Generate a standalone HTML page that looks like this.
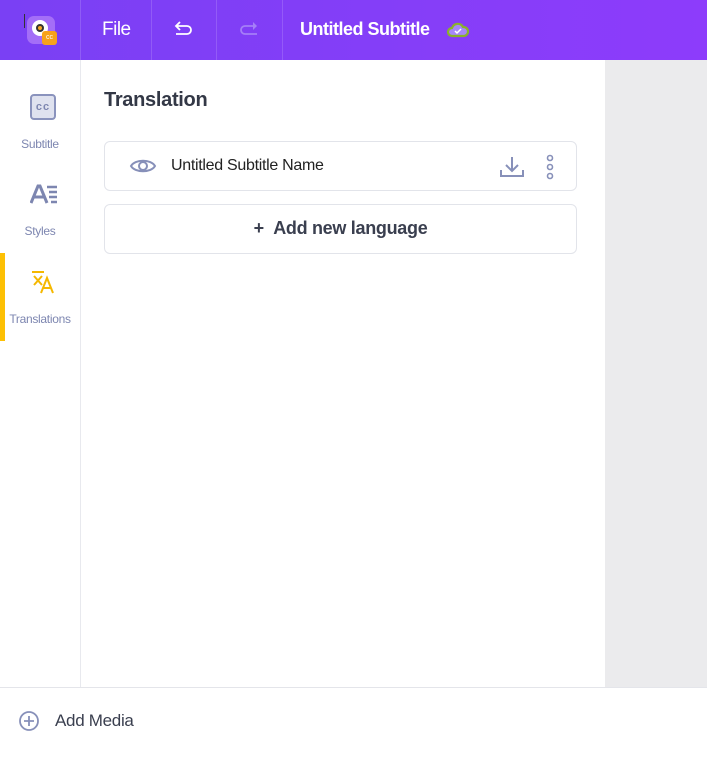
<!DOCTYPE html>
<html><head><style>
*{margin:0;padding:0;box-sizing:border-box}
body{width:707px;height:779px;overflow:hidden;font-family:"Liberation Sans",sans-serif;background:#fff;position:relative}
.hdr{position:absolute;left:0;top:0;width:707px;height:60px;background:linear-gradient(90deg,#7a40f4,#8d3cfb);color:#fff}
.sep{position:absolute;top:0;width:1px;height:60px;background:rgba(255,255,255,0.15)}
.side{position:absolute;left:0;top:60px;width:81px;height:627px;border-right:1px solid #e8e9ee;background:#fff}
.it{position:absolute;left:0;width:80px;text-align:center;font-size:12px;color:#7d86b0;letter-spacing:-0.3px}
.main{position:absolute;left:81px;top:60px;width:524px;height:627px;background:#fff}
.grey{position:absolute;left:605px;top:60px;width:102px;height:627px;background:#ebebed}
.card{position:absolute;left:104px;width:473px;height:50px;border:1px solid #e2e4ea;border-radius:6px;background:#fff}
.bot{position:absolute;left:0;top:687px;width:707px;height:92px;border-top:1px solid #e4e5ea;background:#fff}
</style></head><body>
<div class="hdr">
 <div style="position:absolute;left:27px;top:16px;width:28px;height:28px;border-radius:7px;background:#a46ef7"></div>
 <div style="position:absolute;left:32px;top:20px;width:16px;height:16px;border-radius:50%;background:#fff"></div>
 <div style="position:absolute;left:36px;top:24px;width:8px;height:8px;border-radius:50%;background:#f5a623;border:2px solid #333"></div>
 <div style="position:absolute;left:42px;top:31px;width:15px;height:14px;border-radius:3px;background:#f7a21b;font-size:7px;color:#fff;text-align:center;line-height:14px">cc</div>
 <div style="position:absolute;left:24px;top:14px;width:1px;height:14px;background:#333"></div>
 <div class="sep" style="left:80px"></div>
 <div style="position:absolute;left:102px;top:19px;font-size:19px;letter-spacing:-0.5px">File</div>
 <div class="sep" style="left:151px"></div>
 <svg style="position:absolute;left:173px;top:20px" width="22" height="18" viewBox="0 0 22 18"><path d="M4 6h10a4 4 0 0 1 0 8H3M7 2L3 6l4 4" fill="none" stroke="#fff" stroke-width="1.8"/></svg>
 <div class="sep" style="left:216px"></div>
 <svg style="position:absolute;left:238px;top:20px" width="22" height="18" viewBox="0 0 22 18"><path d="M18 6H7a4 4 0 0 0 0 8h12" fill="none" stroke="#a57ff7" stroke-width="1.8"/><path d="M15 2l4 4-4 4z" fill="#a57ff7"/></svg>
 <div class="sep" style="left:282px"></div>
 <div style="position:absolute;left:300px;top:19px;font-size:18px;font-weight:bold;letter-spacing:-0.5px">Untitled Subtitle</div>
 <svg style="position:absolute;left:446px;top:21px" width="24" height="18" viewBox="0 0 24 18"><path d="M6 15a4 4 0 0 1 0-8 6 6 0 0 1 11-1 4.5 4.5 0 0 1 1 9z" fill="#a689f8" stroke="#8ab22a" stroke-width="2.2"/><path d="M9 10l2 2 4-4" fill="none" stroke="#fff" stroke-width="1.5"/></svg>
</div>
<div class="side">
 <div style="position:absolute;left:30px;top:34px;width:26px;height:26px;border:2px solid #8a93bd;border-radius:4px;background:#dfe2ef;font-size:11px;color:#7d86b0;text-align:center;line-height:22px;font-weight:bold;letter-spacing:1px">cc</div>
 <div class="it" style="top:77px">Subtitle</div>
 <svg style="position:absolute;left:30px;top:124px" width="28" height="20" viewBox="0 0 28 20"><path d="M1 19L8 2h2l7 17M4.5 13h10" fill="none" stroke="#7d86b0" stroke-width="3"/><path d="M17 3h10M19 8h8M19 13h8M21 18h6" stroke="#7d86b0" stroke-width="2.4"/></svg>
 <div class="it" style="top:164px">Styles</div>
 <div style="position:absolute;left:0;top:193px;width:5px;height:88px;background:#fdc004"></div>
 <svg style="position:absolute;left:30px;top:210px" width="26" height="24" viewBox="0 0 26 24"><path d="M2 2h12M4 6l8 9M12 6l-8 9M11 23l6-15 6 15M13 18h8" fill="none" stroke="#f5b800" stroke-width="2"/></svg>
 <div class="it" style="top:252px">Translations</div>
</div>
<div class="main"></div>
<div class="grey"></div>
<div style="position:absolute;left:104px;top:89px;font-size:20px;font-weight:bold;color:#333846;letter-spacing:-0.3px">Translation</div>
<div class="card" style="top:141px">
 <svg style="position:absolute;left:24px;top:15px" width="28" height="18" viewBox="0 0 28 18"><path d="M2 9C6 2 22 2 26 9 22 16 6 16 2 9z" fill="none" stroke="#8790b9" stroke-width="2"/><circle cx="14" cy="9" r="4" fill="none" stroke="#8790b9" stroke-width="2"/></svg>
 <div style="position:absolute;left:66px;top:15px;font-size:16px;color:#222;letter-spacing:-0.3px">Untitled Subtitle Name</div>
 <svg style="position:absolute;left:394px;top:13px" width="26" height="24" viewBox="0 0 26 24"><path d="M13 2v14M7 10l6 6 6-6M2 15v6h22v-6" fill="none" stroke="#8790b9" stroke-width="2"/></svg>
 <svg style="position:absolute;left:440px;top:12px" width="10" height="26"><circle cx="5" cy="4" r="2.5" fill="none" stroke="#8790b9" stroke-width="1.6"/><circle cx="5" cy="13" r="2.5" fill="none" stroke="#8790b9" stroke-width="1.6"/><circle cx="5" cy="22" r="2.5" fill="none" stroke="#8790b9" stroke-width="1.6"/></svg>
</div>
<div class="card" style="top:204px">
 <div style="position:absolute;left:0;width:100%;top:13px;text-align:center;font-size:18px;font-weight:bold;color:#3a3f4f;letter-spacing:-0.3px">+&nbsp;&nbsp;Add new language</div>
</div>
<div class="bot">
 <svg style="position:absolute;left:18px;top:22px" width="22" height="22"><circle cx="11" cy="11" r="9" fill="none" stroke="#8790b9" stroke-width="1.8"/><path d="M11 6v10M6 11h10" stroke="#8790b9" stroke-width="1.8"/></svg>
 <div style="position:absolute;left:55px;top:23px;font-size:17px;color:#3a3f4f;letter-spacing:-0.3px">Add Media</div>
</div>
</body></html>
